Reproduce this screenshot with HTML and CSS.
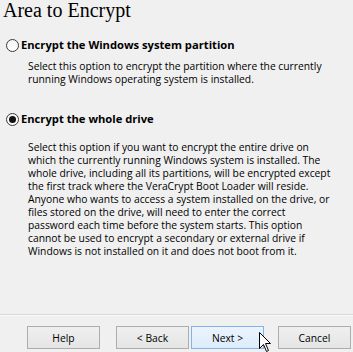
FILE: index.html
```html
<!DOCTYPE html>
<html lang="en">

<head>
    <meta charset="UTF-8">
    <title>VeraCrypt Volume Creation Wizard</title>
    <link rel="stylesheet" href="styles.css">
</head>

<body>
    <div class="wizard">
        <div class="content">
            <h1 class="title">Area to Encrypt</h1>

            <label class="option option-first">
                <span class="radio"></span>
                <span class="option-label">Encrypt the Windows system partition</span>
            </label>
            <p class="desc desc-first">Select this option to encrypt the partition where the currently running Windows operating system is installed.</p>

            <label class="option option-second">
                <span class="radio checked"></span>
                <span class="option-label">Encrypt the whole drive</span>
            </label>
            <p class="desc desc-second">Select this option if you want to encrypt the entire drive on which the currently running Windows system is installed. The whole drive, including all its partitions, will be encrypted except the first track where the VeraCrypt Boot Loader will reside. Anyone who wants to access a system installed on the drive, or files stored on the drive, will need to enter the correct password each time before the system starts. This option cannot be used to encrypt a secondary or external drive if Windows is not installed on it and does not boot from it.</p>
        </div>

        <div class="footer">
            <button class="btn btn-help">Help</button>
            <button class="btn btn-back">&lt; Back</button>
            <button class="btn btn-next">Next &gt;</button>
            <button class="btn">Cancel</button>
        </div>

        <!-- mouse pointer over the Next button -->
        <svg class="cursor" width="13" height="20" viewBox="0 0 13 20">
            <path d="M0.5 0.5 L0.5 16.5 L4.5 12.5 L7.5 19.5 L9.5 18.5 L6.5 11.5 L11.5 11.5 Z" fill="#fff" stroke="#000" stroke-width="1" stroke-linejoin="miter"/>
        </svg>
    </div>
</body>

</html>
```
FILE: styles.css
```css
html,
body {
    margin: 0;
    padding: 0;
}

body {
    background-color: #f0f0f0;
    color: #000;
    font-family: "Open Sans", "Liberation Sans", sans-serif;
    overflow: hidden;
}

.wizard {
    position: relative;
    width: 353px;
    height: 352px;
    display: flex;
    flex-direction: column;
}

.content {
    flex: 1;
}

.title {
    margin: 0;
    padding-left: 3px;
    font-family: "Liberation Serif", "Times New Roman", serif;
    font-weight: normal;
    font-size: 20px;
    line-height: 20px;
}

.option {
    display: flex;
    align-items: center;
    height: 13px;
    padding-left: 6px;
}

.option-first {
    margin-top: 19px;
}

.option-second {
    margin-top: 27px;
}

.option-label {
    margin-left: 2px;
    font-weight: bold;
    font-size: 11.2px;
    line-height: 13px;
    position: relative;
    top: -1px;
}

.radio {
    width: 11px;
    height: 11px;
    border: 1px solid #3a3a3a;
    border-radius: 50%;
    background: linear-gradient(#f4f4f4, #ffffff);
    display: flex;
    align-items: center;
    justify-content: center;
}

.radio.checked:after {
    content: '';
    width: 7px;
    height: 7px;
    border-radius: 50%;
    background-color: #111;
}

.desc {
    margin: 0;
    padding-left: 28px;
    padding-right: 20px;
    font-size: 10.3px;
    line-height: 13px;
}

.desc-first {
    margin-top: 8px;
}

.desc-second {
    margin-top: 15px;
}

.footer {
    height: 38px;
    border-top: 1px solid #dadada;
    box-shadow: inset 0 1px 0 #fafafa;
    display: flex;
    align-items: flex-start;
    padding-left: 27px;
    padding-top: 11px;
    box-sizing: border-box;
}

.btn {
    width: 73px;
    height: 23px;
    padding: 0;
    border: 1px solid #adadad;
    background: linear-gradient(#efefef, #e5e5e5);
    font-family: "Open Sans", "Liberation Sans", sans-serif;
    font-size: 10.3px;
    color: #000;
}

.btn-help {
    margin-right: 16px;
}

.btn-back {
    margin-right: 2px;
}

.btn-next {
    margin-right: 14px;
    border-color: #7eb4ea;
    background: linear-gradient(#ecf4fc, #dcecfc);
}

.cursor {
    position: absolute;
    left: 259px;
    top: 332px;
}
```
